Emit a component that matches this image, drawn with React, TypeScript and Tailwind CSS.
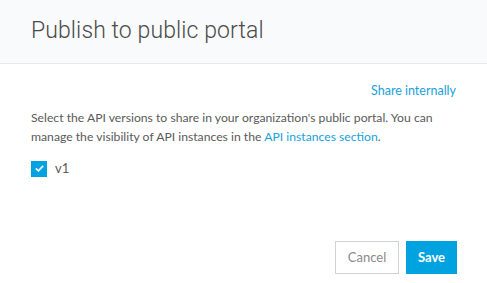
import React from "react";

export default function App() {
  return (
    <div className="w-[487px] h-[283px] bg-white flex flex-col" style={{ fontFamily: 'Lato, "Open Sans", "Liberation Sans", sans-serif' }}>
      <div className="h-[64px] bg-[#f9fafb] border-b border-[#e6e8ea] flex items-center pl-[31px] pb-[1px]">
        <h1 className="text-[23px] font-light text-[#4a4a4a] tracking-[0.1px]" style={{ fontFamily: 'Roboto, "Liberation Sans", sans-serif' }}>
          Publish to public portal
        </h1>
      </div>
      <div className="flex flex-col px-[31px] pt-[17px]">
        <div className="flex justify-end">
          <a className="text-[12.5px] text-[#1a9fdb] leading-[20px]">Share internally</a>
        </div>
        <p className="mt-[7px] text-[12.2px] leading-[19px] text-[#5a5a5a]">
          Select the API versions to share in your organization's public portal. You can manage the visibility of API instances in the <span className="text-[#1a9fdb]">API instances section</span>.
        </p>
        <label className="mt-[13px] flex items-center gap-[8px]">
          <span className="w-[16px] h-[16px] bg-[#00a2df] flex items-center justify-center">
            <svg width="9" height="7" viewBox="0 0 9 7" fill="none">
              <path d="M0.8 3.4l2.6 2.4L8.2 0.9" stroke="white" strokeWidth="1.7" />
            </svg>
          </span>
          <span className="text-[13px] text-[#5a5a5a]">v1</span>
        </label>
      </div>
      <div className="flex-1" />
      <div className="flex justify-end gap-[7px] pr-[30px] pb-[9px]">
        <button className="h-[33px] w-[64px] border border-[#cfd3d6] bg-white text-[13px] text-[#8a8a8a]">Cancel</button>
        <button className="h-[33px] w-[51px] bg-[#00a2df] text-[13px] font-bold text-white">Save</button>
      </div>
    </div>
  );
}
